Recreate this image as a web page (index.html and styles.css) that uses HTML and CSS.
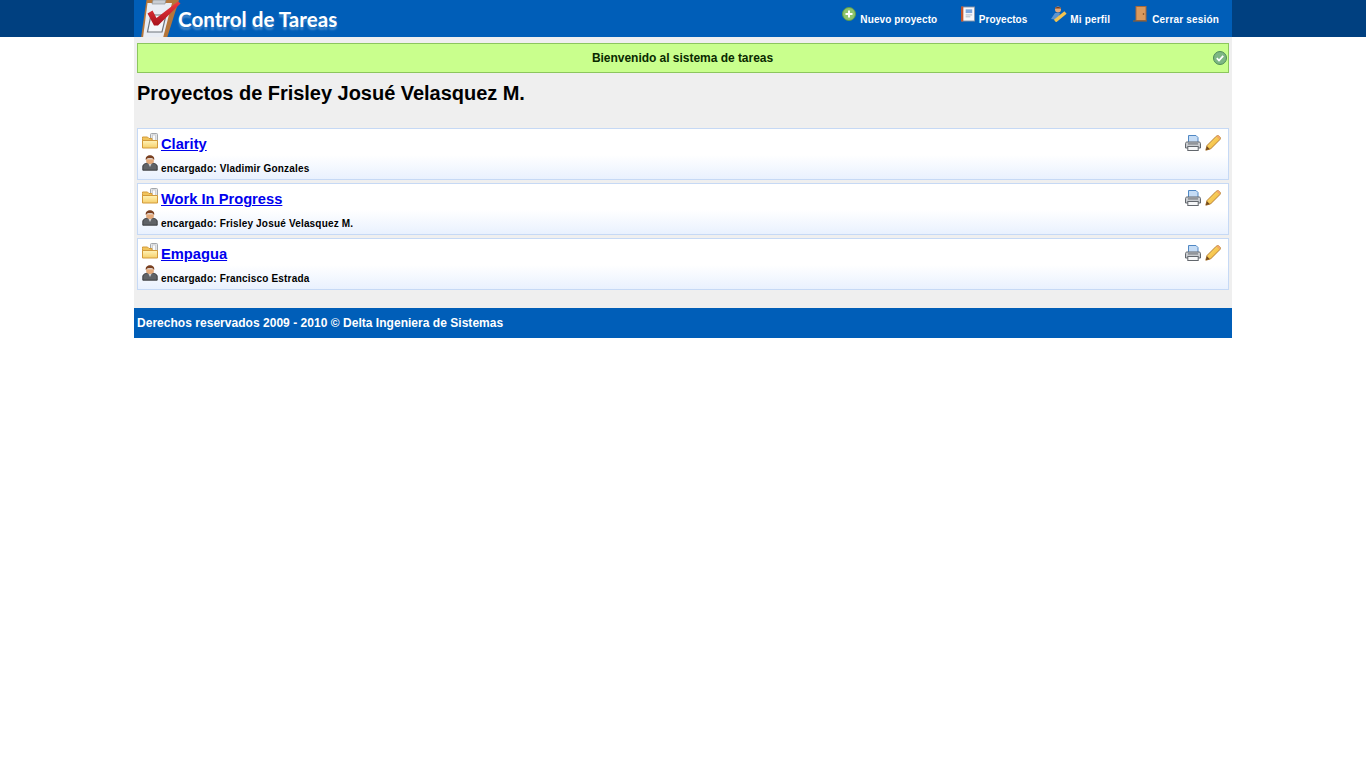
FILE: index.html
```html
<!DOCTYPE html>
<html lang="es">
<head>
<meta charset="utf-8">
<title>Control de Tareas</title>
<link rel="stylesheet" href="styles.css">
</head>
<body>
<svg class="defs" width="0" height="0" aria-hidden="true">
  <defs>
    <linearGradient id="g-folder" x1="0" y1="0" x2="0" y2="1"><stop offset="0" stop-color="#fff3b8"/><stop offset="1" stop-color="#f6cf6a"/></linearGradient>
    <linearGradient id="g-pencil" x1="0" y1="0" x2="1" y2="1"><stop offset="0" stop-color="#ffe27a"/><stop offset="1" stop-color="#eeb02e"/></linearGradient>
    <linearGradient id="g-check" x1="0" y1="0" x2="0" y2="1"><stop offset="0" stop-color="#f03a3f"/><stop offset="1" stop-color="#a8121c"/></linearGradient>
    <symbol id="i-folder" viewBox="0 0 16 16">
      <rect x="8.500" y="0.500" width="7" height="10" rx="1" fill="#e4e6e8" stroke="#a2a6ab"/>
      <rect x="10.500" y="2" width="3" height="6" fill="#fbfbfb" stroke="#b9bdc1" stroke-width=".6"/>
      <path d="M.5 5.500V4h5l1.500 1.500H10v3H.5z" fill="#f1c45c" stroke="#d39a3a"/>
      <path d="M.5 7.500h15v7.500H.5z" fill="url(#g-folder)" stroke="#d39a3a"/>
    </symbol>
    <symbol id="i-user" viewBox="0 0 16 16">
      <path d="M.8 15.200v-4c0-1.700 2.400-2.800 4.700-3.200h5c2.300.4 4.700 1.500 4.700 3.200v4z" fill="#5f6266" stroke="#343639" stroke-width=".9"/>
      <path d="M6.200 8.200 8 12l1.800-3.800z" fill="#d2d5d8"/>
      <path d="M4.200 4.200h7.600v2.300c0 1.600-1.700 2.500-3.800 2.500s-3.800-.9-3.800-2.500z" fill="#e3a97a"/>
      <path d="M3.800 5C3.300 1.800 5.500.3 8 .3s4.700 1.500 4.200 4.700c-.9-1.300-1.700-1.700-4.200-1.700S4.700 3.700 3.800 5z" fill="#7a4020"/>
    </symbol>
    <symbol id="i-print" viewBox="0 0 16 16">
      <path d="M3.500.5h7.500L13 2.500v7H3.500z" fill="#c5dcf5" stroke="#5088c4"/>
      <path d="M.5 8.500c0-1 .7-1.500 1.500-1.500h12c.8 0 1.500.5 1.500 1.500V13h-15z" fill="#c9ccd0" stroke="#62676d"/>
      <rect x="2.800" y="11.500" width="10.400" height="4" fill="#f6f7f8" stroke="#62676d"/>
      <rect x="3" y="8.200" width="10" height="1.400" fill="#83888e"/>
    </symbol>
    <symbol id="i-pencil" viewBox="0 0 16 16">
      <path d="M.8 15.200 2 10.500 11.200 1.300c.9-.9 2.200-.9 3.100 0l.4.4c.9.900.9 2.200 0 3.100L5.500 14z" fill="url(#g-pencil)" stroke="#b0752a" stroke-width=".9"/>
      <path d="M11.400 1.600 14.400 4.600l.6-.8c.7-1-.1-2.300-.8-2.900-.8-.6-1.900-.3-2.800.7z" fill="#f0a768"/>
      <path d="M.8 15.200 1.900 11.300 4.700 14.100z" fill="#704a22"/>
    </symbol>
  </defs>
</svg>
<header class="topbar">
  <div class="topbar-inner">
    <a class="brand" href="#">
      <svg class="brand-icon" viewBox="0 0 42 38" width="42" height="38" aria-hidden="true">
        <path d="M7.500 0H40L28 38H2z" fill="#b5763a"/>
        <path d="M8.500 3h24.500L24 38H4z" fill="#e9edf4"/>
        <path d="M14 0h13l-1 4H13z" fill="#c9cdd3" stroke="#85898f" stroke-width=".6"/>
        <path d="M12 15h15l-4 17H8.500z" fill="#f5f7fa" stroke="#6f747b" stroke-width="1.200"/>
        <path d="M8.500 13.500 13.500 10.500 17.500 18 39 1.500 41.500 3.500 19 25.500H15z" fill="url(#g-check)"/>
      </svg>
      <span class="brand-text">Control de Tareas</span>
    </a>
    <nav class="menu">
      <a class="menu-item snug" href="#">
        <svg class="menu-icon" viewBox="0 0 14 14" aria-hidden="true"><circle cx="7" cy="7" r="6.500" fill="#8fc46b" stroke="#5f9a4a"/><path d="M7 3.500v7M3.500 7h7" stroke="#fff" stroke-width="2"/></svg>
        <span>Nuevo proyecto</span>
      </a>
      <a class="menu-item plain" href="#">
        <svg class="menu-icon" viewBox="0 0 15 16" aria-hidden="true"><rect x="1" y=".5" width="13.500" height="15" fill="#f6f8fb" stroke="#8a94a5"/><rect x="0" y="0" width="2.500" height="16" fill="#c2552c"/><rect x="5" y="3" width="7" height="4" fill="#7da6db"/><path d="M5 9h7M5 11h5" stroke="#a9b3c2"/></svg>
        <span>Proyectos</span>
      </a>
      <a class="menu-item" href="#">
        <svg class="menu-icon wide" viewBox="0 0 17 16" aria-hidden="true"><circle cx="8" cy="3.500" r="3" fill="#e3aa7c"/><path d="M5 2.500C5 .5 11 .5 11 2.500z" fill="#7a3d1d"/><path d="M1 13l4-6h5l-2 7z" fill="#5c94cf"/><path d="M5 15 15.500 6.500" stroke="#f2c34e" stroke-width="3.500"/></svg>
        <span class="tight">Mi perfil</span>
      </a>
      <a class="menu-item" href="#">
        <svg class="menu-icon" viewBox="0 0 14 16" aria-hidden="true"><rect x="3" y=".5" width="10" height="14" fill="#d99a5e" stroke="#a8693a"/><circle cx="10.500" cy="8" r=".8" fill="#6b3d1b"/><path d="M0 15h14" stroke="#8a6038" stroke-width="1.200"/></svg>
        <span class="loose">Cerrar sesión</span>
      </a>
    </nav>
  </div>
</header>
<div class="page">
  <main class="content">
    <div class="notice">
      <span class="notice-text">Bienvenido al sistema de tareas</span>
      <svg class="notice-icon" viewBox="0 0 14 14" aria-hidden="true"><circle cx="7" cy="7" r="6.500" fill="#7db784" stroke="#4f8a5a"/><path d="M3.800 7.200 6 9.500l4.200-4.700" fill="none" stroke="#fff" stroke-width="1.800"/></svg>
    </div>
    <h1 class="title">Proyectos de Frisley Josué Velasquez M.</h1>
    <ul class="projects">
      <li class="project">
        <div class="project-main">
          <svg class="ico"><use href="#i-folder"/></svg>
          <a class="project-name" href="#">Clarity</a>
          <span class="actions"><svg class="ico"><use href="#i-print"/></svg><svg class="ico"><use href="#i-pencil"/></svg></span>
        </div>
        <div class="project-owner"><svg class="ico"><use href="#i-user"/></svg><span>encargado: Vladimir Gonzales</span></div>
      </li>
      <li class="project">
        <div class="project-main">
          <svg class="ico"><use href="#i-folder"/></svg>
          <a class="project-name" href="#">Work In Progress</a>
          <span class="actions"><svg class="ico"><use href="#i-print"/></svg><svg class="ico"><use href="#i-pencil"/></svg></span>
        </div>
        <div class="project-owner"><svg class="ico"><use href="#i-user"/></svg><span>encargado: Frisley Josué Velasquez M.</span></div>
      </li>
      <li class="project">
        <div class="project-main">
          <svg class="ico"><use href="#i-folder"/></svg>
          <a class="project-name" href="#">Empagua</a>
          <span class="actions"><svg class="ico"><use href="#i-print"/></svg><svg class="ico"><use href="#i-pencil"/></svg></span>
        </div>
        <div class="project-owner"><svg class="ico"><use href="#i-user"/></svg><span>encargado: Francisco Estrada</span></div>
      </li>
    </ul>
  </main>
  <footer class="footer">Derechos reservados 2009 - 2010 © Delta Ingeniera de Sistemas</footer>
</div>
</body>
</html>
```
FILE: styles.css
```css
* { box-sizing: border-box; }
html, body { margin: 0; padding: 0; }
body { background: #fff; font-family: "Liberation Sans", Arial, sans-serif; color: #000; }
.defs { position: absolute; }
.topbar { height: 37px; background: #004080; }
.topbar-inner { width: 1098px; height: 37px; margin: 0 auto; background: #005eb8; display: flex; justify-content: space-between; overflow: hidden; }
.brand { display: flex; align-items: flex-start; text-decoration: none; padding-left: 5px; }
.brand-icon { display: block; flex: none; }
.brand-text { font-family: Lato, sans-serif; font-weight: 700; font-size: 20.6px; line-height: 39px; color: #fff; margin-left: -3px; text-shadow: 0 3px 2px rgba(255, 255, 255, .25); }
.menu { display: flex; align-items: flex-start; padding-right: 13px; gap: 23px; padding-top: 6px; }
.menu-item { display: flex; align-items: flex-start; gap: 4px; color: #fff; font-size: 10px; letter-spacing: .18px; font-weight: 700; text-decoration: none; line-height: 13px; }
.menu-item.snug { letter-spacing: .1px; margin-right: .5px; }
.menu-item.plain { letter-spacing: 0; }
.menu-item span { margin-top: 7px; }
.menu-item .tight { margin-left: -1px; }
.menu-item .loose { margin-left: 1px; }
.menu-icon { width: 14px; height: 16px; display: block; }
.menu-icon.wide { width: 17px; height: 16px; }
.page { width: 1098px; margin: 0 auto; }
.content { background: #efefef; height: 271px; padding: 6px 3px 0; }
.notice { position: relative; height: 30px; background: #c9ff8d; border: 1px solid #8cc65e; font-size: 12px; letter-spacing: -.03px; font-weight: 700; line-height: 28px; text-align: center; color: #0a2a00; }
.notice-text { display: inline-block; margin-right: 1px; }
.notice-icon { position: absolute; right: 1px; top: 7px; width: 14px; height: 14px; }
.title { margin: 9px 0 0; font-size: 20px; letter-spacing: -.03px; line-height: 23px; font-weight: 700; }
.projects { list-style: none; margin: 23px 0 0; padding: 0; display: flex; flex-direction: column; gap: 3px; }
.project { height: 52px; border: 1px solid #c6d9f5; background: linear-gradient(#fff 0, #fff 26px, #e9f1fe 50px); padding: 4px 7px 0 4px; }
.project-main { display: flex; align-items: flex-start; height: 22px; }
.ico { width: 16px; height: 16px; display: block; flex: none; }
.project-name { font-size: 14.7px; font-weight: 700; color: #00e; margin-left: 3px; line-height: 16px; margin-top: 3px; }
.actions { margin-left: auto; margin-top: 2px; display: flex; gap: 4px; }
.project-owner { display: flex; align-items: flex-start; font-size: 10px; font-weight: 700; line-height: 12px; }
.project-owner span { margin-left: 3px; margin-top: 8px; letter-spacing: .18px; }
.footer { height: 30px; background: #005eb8; color: #fff; font-size: 12px; letter-spacing: .03px; font-weight: 700; line-height: 30px; padding-left: 3px; }
```
